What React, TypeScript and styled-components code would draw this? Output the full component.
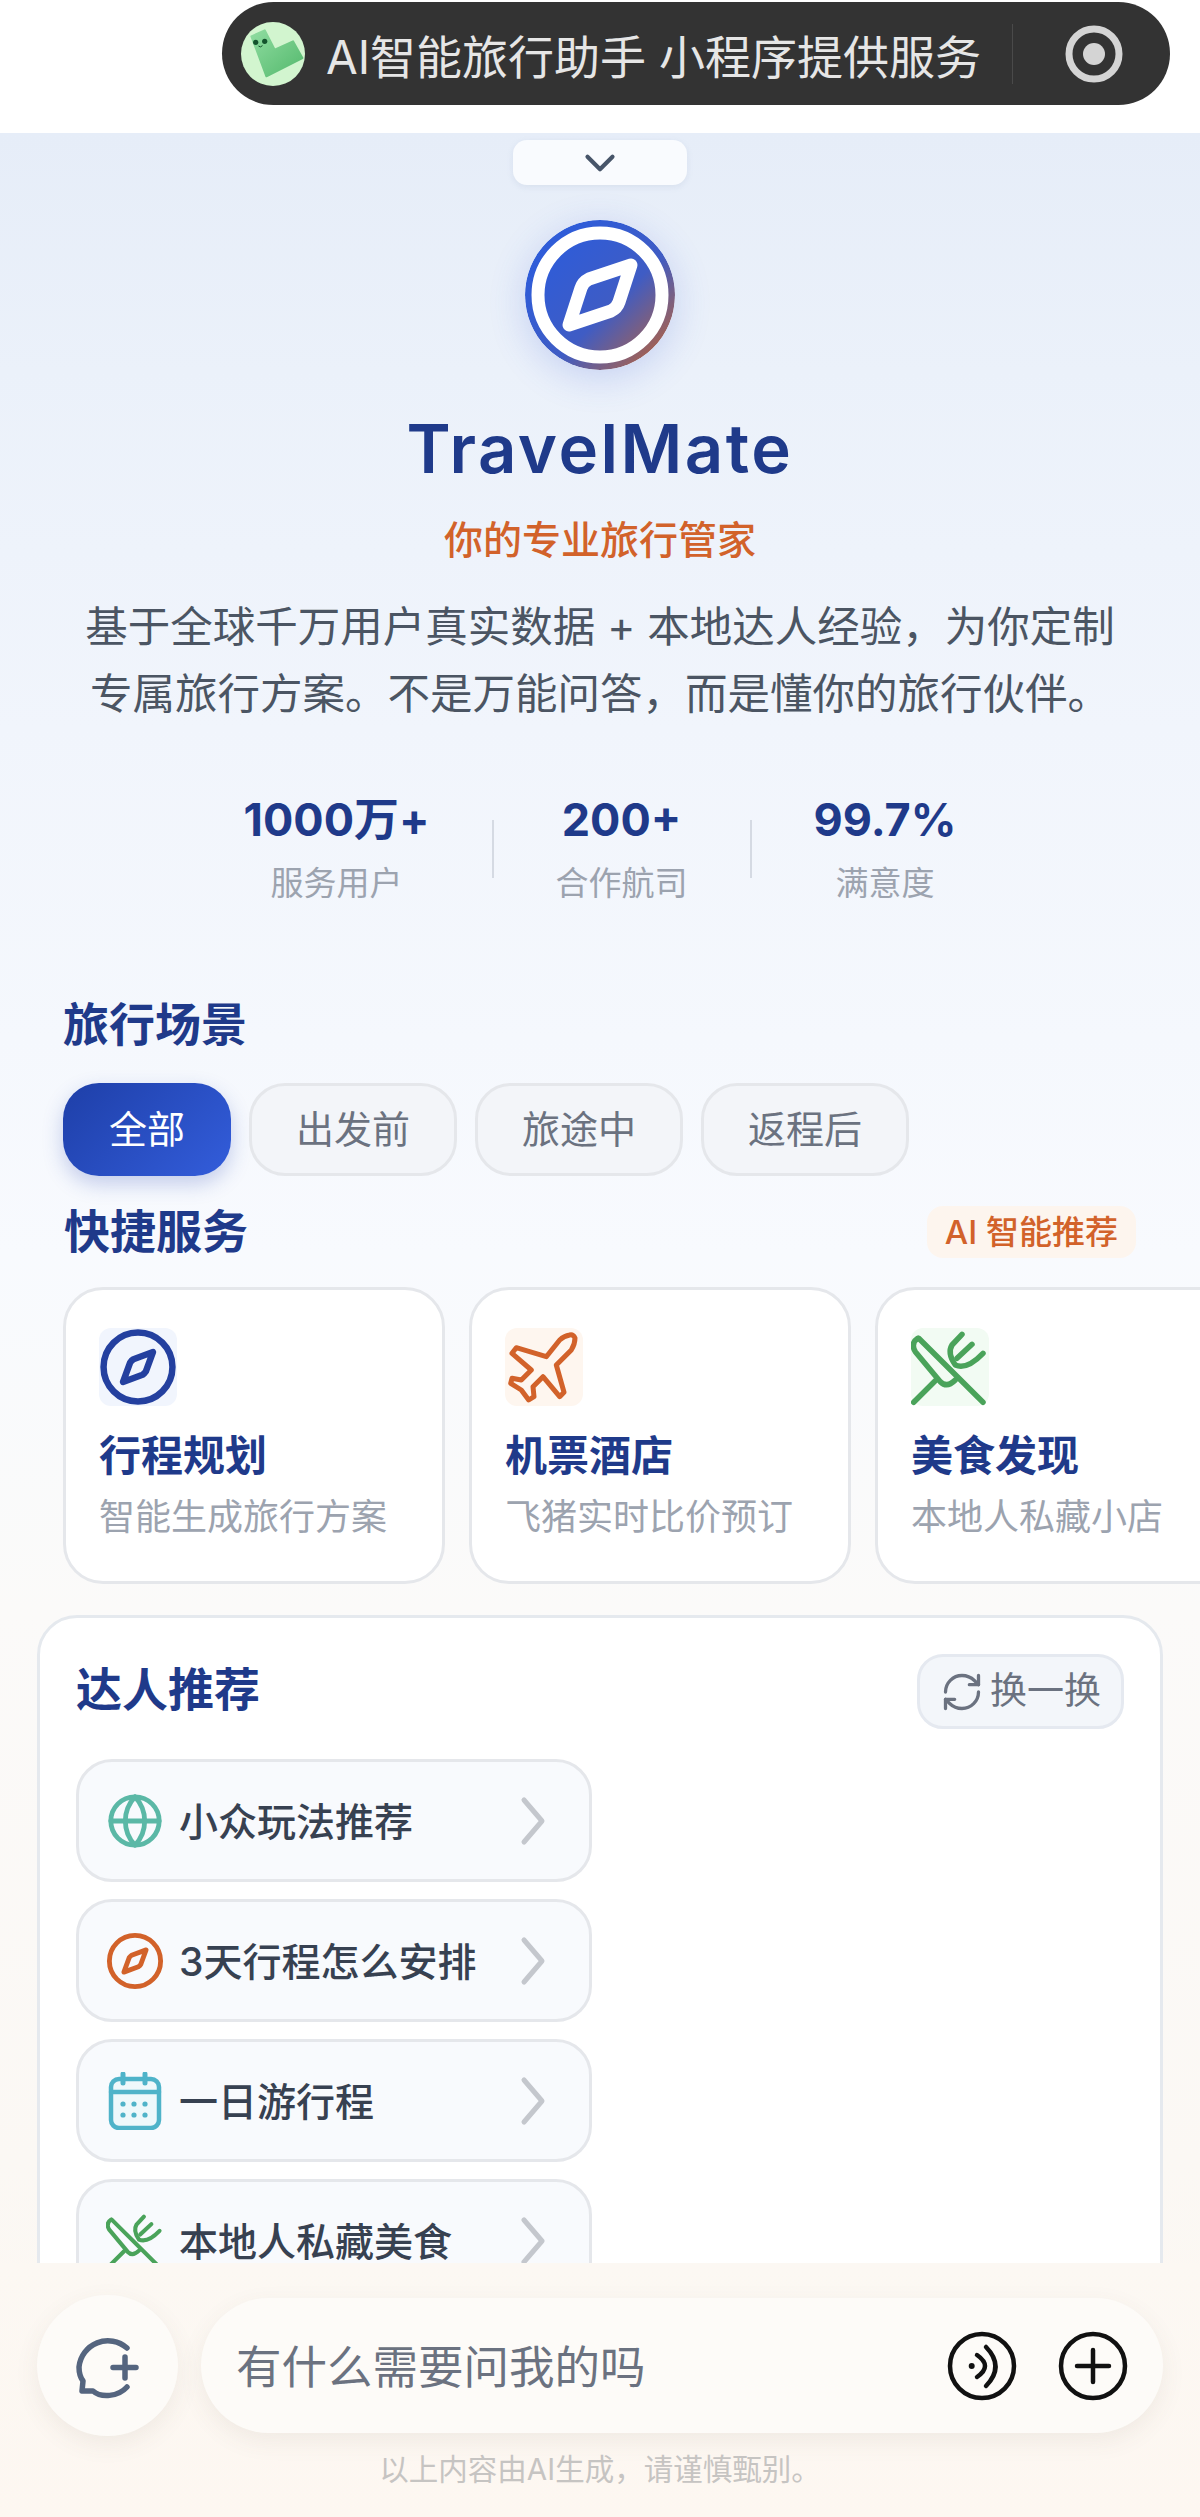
import React from 'react';
import styled, { createGlobalStyle } from 'styled-components';
import { ChevronDown, Globe, RefreshCw } from 'lucide-react';

const SANS = `Inter, "Noto Sans CJK SC", "Noto Sans", sans-serif`;
const NAVY = '#1f3a8a';
const ORANGE = '#d2622a';

const GlobalStyle = createGlobalStyle`
    html, body {
        margin: 0;
        padding: 0;
        background: #fff;
    }
    * {
        box-sizing: border-box;
    }
`;

const Page = styled.div`
    width: 1200px;
    height: 2517px;
    display: flex;
    flex-direction: column;
    overflow: hidden;
    font-family: ${SANS};
`;

const TopBar = styled.header`
    flex: none;
    height: 133px;
    background: #fff;
    display: flex;
    justify-content: flex-end;
    padding: 2px 30px 0 0;
`;

const Capsule = styled.div`
    width: 948px;
    height: 103px;
    border-radius: 52px;
    background: #333333;
    display: flex;
    align-items: center;
    padding-left: 19px;
`;

const MiniAvatar = styled.svg`
    width: 64px;
    height: 64px;
    flex: none;
`;

const CapsuleTitle = styled.span`
    margin-left: 21px;
    font-size: 46px;
    font-weight: 400;
    color: #e6e6e6;
    white-space: nowrap;
    flex: none;
    width: 686px;
`;

const CapsuleDivider = styled.span`
    width: 1px;
    height: 60px;
    background: #4a4a4a;
    flex: none;
`;

const TargetIcon = styled.svg`
    width: 60px;
    height: 60px;
    margin-left: 51px;
    flex: none;
`;

const Body = styled.div`
    flex: 1;
    min-height: 0;
    display: flex;
    flex-direction: column;
    background: linear-gradient(180deg, #e6edf8 0%, #ebf1fa 10%, #f1f5fc 25%, #f5f8fd 38%, #f8fafe 47%, #fbfaf9 62%, #fbf8f4 85%, #fdf7f1 100%);
`;

const Scroll = styled.main`
    flex: 1;
    min-height: 0;
    overflow: hidden;
    display: flex;
    flex-direction: column;
`;

const Hero = styled.section`
    display: flex;
    flex-direction: column;
    align-items: center;
    flex: none;
`;

const CollapseTab = styled.button`
    margin-top: 7px;
    width: 174px;
    height: 45px;
    border: none;
    border-radius: 14px;
    background: #f9fbfe;
    box-shadow: 0 2px 6px rgba(120, 140, 180, 0.14);
    color: #475569;
    display: flex;
    align-items: center;
    justify-content: center;
    padding: 0;
`;

const LogoBadge = styled.svg`
    margin-top: 35px;
    width: 150px;
    height: 150px;
    border-radius: 50%;
    box-shadow: 0 8px 36px rgba(70, 100, 220, 0.22);
    flex: none;
`;

const BrandName = styled.h1`
    margin: 47px 0 0;
    font-size: 67px;
    line-height: 64px;
    font-weight: 600;
    letter-spacing: 2.5px;
    color: ${NAVY};
`;

const Tagline = styled.div`
    margin-top: 34px;
    font-size: 39px;
    line-height: 50px;
    font-weight: 500;
    color: ${ORANGE};
`;

const Intro = styled.p`
    margin: 28px 0 0;
    font-size: 42.5px;
    line-height: 67px;
    color: #4b5563;
    text-align: center;
    white-space: nowrap;
`;

const StatsRow = styled.div`
    margin-top: 68px;
    display: flex;
    align-items: flex-start;
`;

const Stat = styled.div`
    padding: 0 62px;
    display: flex;
    flex-direction: column;
    align-items: center;
    gap: 18px;
`;

const StatValue = styled.div`
    font-size: 45px;
    line-height: 50px;
    font-weight: 700;
    color: ${NAVY};
    white-space: nowrap;
`;

const StatLabel = styled.div`
    font-size: 33px;
    line-height: 40px;
    color: #9ca3af;
    white-space: nowrap;
`;

const StatDivider = styled.div`
    width: 2px;
    height: 58px;
    margin-top: 25px;
    background: #d5dae3;
    flex: none;
`;

const Section = styled.section`
    flex: none;
    padding-left: 63px;
`;

const SectionTitle = styled.h2`
    margin: 93px 0 0;
    font-size: 46px;
    line-height: 56px;
    font-weight: 600;
    color: ${NAVY};
`;

const ChipRow = styled.div`
    margin-top: 31px;
    display: flex;
    gap: 18px;
`;

const Chip = styled.button<{ $active?: boolean }>`
    height: 93px;
    padding: 0 ${props => props.$active ? 46 : 44}px 7px;
    border-radius: 36px;
    font-family: ${SANS};
    font-size: 38px;
    white-space: nowrap;
    border: ${props => props.$active ? 'none' : '3px solid #e5e7eb'};
    color: ${props => props.$active ? '#fff' : '#6b7280'};
    background: ${props => props.$active ? 'linear-gradient(135deg, #1e3fa8, #335ddb)' : '#f3f5f9'};
    box-shadow: ${props => props.$active ? '0 8px 20px rgba(40, 70, 180, 0.25)' : 'none'};
`;

const ServiceHead = styled.div`
    margin-top: 30px;
    height: 52px;
    display: flex;
    align-items: center;
    justify-content: space-between;
    padding-right: 64px;
`;

const ServiceTitle = styled.h2`
    margin: 0 0 2px 1px;
    font-size: 46px;
    line-height: 56px;
    font-weight: 600;
    color: ${NAVY};
`;

const SmartTag = styled.span`
    height: 52px;
    padding: 0 18px 4px;
    border-radius: 16px;
    background: #fdf5ee;
    color: ${ORANGE};
    font-size: 33px;
    font-weight: 500;
    display: flex;
    align-items: center;
    white-space: nowrap;
`;

const CardRow = styled.div`
    margin-top: 29px;
    display: flex;
    gap: 24px;
    overflow: hidden;
`;

const ServiceCard = styled.article`
    flex: none;
    width: 382px;
    height: 297px;
    padding: 38px 0 0 33px;
    background: #fff;
    border: 3px solid #e5e7eb;
    border-radius: 40px;
`;

const CardIcon = styled.div<{ $bg: string; $color: string }>`
    width: 78px;
    height: 78px;
    border-radius: 12px;
    background: ${props => props.$bg};
    color: ${props => props.$color};
    display: flex;
    align-items: center;
    justify-content: center;
`;

const CardTitle = styled.div`
    margin-top: 22px;
    font-size: 42px;
    line-height: 56px;
    font-weight: 600;
    color: ${NAVY};
    white-space: nowrap;
`;

const CardText = styled.div`
    margin-top: 9px;
    font-size: 36px;
    line-height: 48px;
    color: #9ca3af;
    white-space: nowrap;
`;

const ExpertPanel = styled.section`
    flex: none;
    margin: 31px 0 0 37px;
    width: 1126px;
    height: 700px;
    padding: 36px 36px 0;
    background: #fff;
    border: 3px solid #e5e9ee;
    border-radius: 40px;
`;

const PanelHead = styled.div`
    display: flex;
    align-items: center;
    justify-content: space-between;
    height: 75px;
`;

const PanelTitle = styled.h3`
    margin: 0 0 12px;
    font-size: 46px;
    font-weight: 600;
    color: ${NAVY};
`;

const SwapButton = styled.button`
    width: 207px;
    height: 75px;
    border-radius: 26px;
    border: 3px solid #e5e9f0;
    background: #f3f6fa;
    color: #6b7280;
    font-family: ${SANS};
    font-size: 37px;
    display: flex;
    align-items: center;
    justify-content: center;
    gap: 6px;
    padding: 0 0 7px;
    svg {
        margin-top: 7px;
    }
`;

const PromptList = styled.div`
    margin-top: 30px;
    display: flex;
    flex-direction: column;
    gap: 17px;
`;

const PromptItem = styled.div`
    width: 516px;
    height: 123px;
    flex: none;
    padding: 0 43px 0 27px;
    border-radius: 36px;
    border: 3px solid #e5e7eb;
    background: #f8fafd;
    display: flex;
    align-items: center;
`;

const PromptIcon = styled.div<{ $color: string }>`
    width: 58px;
    height: 58px;
    flex: none;
    color: ${props => props.$color};
    display: flex;
    align-items: center;
    justify-content: center;
`;

const PromptText = styled.span`
    margin-left: 15px;
    padding-bottom: 4px;
    flex: 1;
    font-size: 39px;
    font-weight: 500;
    color: #374151;
    white-space: nowrap;
`;

const PromptArrow = styled.svg`
    width: 26px;
    height: 50px;
    flex: none;
`;

const Composer = styled.footer`
    flex: none;
    height: 254px;
    background: linear-gradient(180deg, #fcf8f3, #fdf7f1);
    position: relative;
    z-index: 1;
    padding: 32px 37px 0;
`;

const ComposerRow = styled.div`
    display: flex;
    align-items: center;
    gap: 23px;
`;

const NewChatButton = styled.button`
    flex: none;
    width: 141px;
    height: 141px;
    border: none;
    border-radius: 50%;
    background: #fdfbf8;
    box-shadow: 0 8px 24px rgba(90, 80, 70, 0.08);
    display: flex;
    align-items: center;
    justify-content: center;
    padding: 0;
`;

const InputBox = styled.div`
    flex: 1;
    height: 135px;
    border-radius: 68px;
    background: #fdfbf8;
    box-shadow: 0 8px 24px rgba(90, 80, 70, 0.08);
    display: flex;
    align-items: center;
    padding: 0 35px 0 35px;
`;

const Placeholder = styled.span`
    flex: 1;
    padding-bottom: 4px;
    font-size: 45.5px;
    color: #6b7280;
    white-space: nowrap;
`;

const RoundIcon = styled.svg`
    flex: none;
    width: 70px;
    height: 70px;
    color: #111;
    & + & {
        margin-left: 41px;
    }
`;

const Disclaimer = styled.div`
    margin-top: 13px;
    text-align: center;
    font-size: 29.5px;
    line-height: 40px;
    color: #c6c4c2;
`;

const CompassGlyph: React.FC<{ size: number; stroke: number }> = ({ size, stroke }) => (
    <svg width={size} height={size} viewBox="0 0 24 24" fill="none" stroke="currentColor" strokeWidth={stroke} strokeLinejoin="round">
        <circle cx="12" cy="12" r="10.6" />
        <path d="M16.6 7.4 L14.4 13.4 Q14 14 13.4 14.4 L7.4 16.6 L9.6 10.6 Q10 10 10.6 9.6 Z" />
    </svg>
);

const PlaneGlyph = () => (
    <svg width="78" height="78" viewBox="0 0 78 78" fill="none" stroke="currentColor" strokeWidth="5" strokeLinejoin="round" strokeLinecap="round">
        <path d="M70 10 Q68 6 64.7 7 Q59 8 54.7 12 L41.3 28.7 L11.3 19.7 L7 25.3 L26.3 42 L16.3 52 L7 50.3 L5.7 55.3 L16.3 62 L23.7 72 L29 68.7 L28 58.7 L38 48.7 L54.7 68.7 L59 64.3 L51.3 37 L66.3 22 Q70 16 70 10 Z" />
    </svg>
);

const UtensilsGlyph: React.FC<{ size: number }> = ({ size }) => (
    <svg width={size} height={size} viewBox="0 0 78 78" fill="none" stroke="currentColor" strokeWidth="5.5" strokeLinejoin="round" strokeLinecap="round">
        <path d="M7.7 10.3 L72 74.3" />
        <path d="M6.7 10.3 Q-0.7 15.3 4.3 23.7 L29.3 53.7 Q36 60.3 44.3 52" />
        <path d="M2.7 74.3 L24.3 52.7" />
        <path d="M51 6.3 L41 17 Q36 25.3 44.3 37 Q56 42 72 25.3" />
        <path d="M61 16.3 L46 30.3" />
    </svg>
);

const CalendarGlyph = () => (
    <svg width="54" height="58" viewBox="0 0 54 58" fill="none" stroke="#4fb3c9" strokeWidth="4.5" strokeLinecap="round">
        <rect x="3" y="7" width="48" height="49" rx="8" fill="#eef8fb" />
        <path d="M3 20 H51" />
        <path d="M15 2 V11 M37 2 V11" strokeWidth="5" />
        {[15, 26, 37].map(x => [32, 43].map(y => <circle key={`${x}-${y}`} cx={x} cy={y} r="2.6" fill="#4fb3c9" stroke="none" />))}
    </svg>
);

const prompts = [
    { text: '小众玩法推荐', color: '#5bb8a6', icon: <Globe size={70} strokeWidth={2} /> },
    { text: '3天行程怎么安排', color: ORANGE, icon: <CompassGlyph size={58} stroke={2} /> },
    { text: '一日游行程', color: '#4fb3c9', icon: <CalendarGlyph /> },
    { text: '本地人私藏美食', color: '#4aa35a', icon: <UtensilsGlyph size={58} /> },
];

const services = [
    { title: '行程规划', text: '智能生成旅行方案', bg: '#f1f5fd', color: '#24409f', icon: <CompassGlyph size={78} stroke={2} /> },
    { title: '机票酒店', text: '飞猪实时比价预订', bg: '#fef6ef', color: ORANGE, icon: <PlaneGlyph /> },
    { title: '美食发现', text: '本地人私藏小店', bg: '#f2fbf3', color: '#4aa35a', icon: <UtensilsGlyph size={78} /> },
];

export default function App() {
    return (
        <Page>
            <GlobalStyle />
            <TopBar>
                <Capsule>
                    <MiniAvatar viewBox="0 0 64 64">
                        <defs>
                            <linearGradient id="wormFill" x1="0" y1="0" x2="1" y2="1">
                                <stop offset="0" stopColor="#8fdca0" />
                                <stop offset="1" stopColor="#54b96d" />
                            </linearGradient>
                        </defs>
                        <circle cx="32" cy="32" r="32" fill="#d2f5cf" />
                        <path d="M10.4 14.3 L23.7 8.3 L33.7 27.6 L52 19.3 L61.4 36 L25.4 54.3 Z" fill="url(#wormFill)" stroke="url(#wormFill)" strokeWidth="2" strokeLinejoin="round" />
                        <circle cx="14.7" cy="20.3" r="2.6" fill="#14532d" />
                        <circle cx="23.7" cy="19.3" r="2.6" fill="#14532d" />
                        <path d="M17.5 24 Q19.5 26 21.5 23.6" fill="none" stroke="#14532d" strokeWidth="1" />
                    </MiniAvatar>
                    <CapsuleTitle>AI智能旅行助手 小程序提供服务</CapsuleTitle>
                    <CapsuleDivider />
                    <TargetIcon viewBox="0 0 60 60">
                        <circle cx="30" cy="30" r="25" fill="none" stroke="#d4d4d4" strokeWidth="7" />
                        <circle cx="30" cy="30" r="11" fill="#d4d4d4" />
                    </TargetIcon>
                </Capsule>
            </TopBar>
            <Body>
                <Scroll>
                    <Hero>
                        <CollapseTab><ChevronDown size={50} strokeWidth={2} /></CollapseTab>
                        <LogoBadge viewBox="0 0 150 150">
                            <defs>
                                <linearGradient id="logoFill" x1="0.2" y1="0.2" x2="0.95" y2="0.95">
                                    <stop offset="0" stopColor="#2f5cd8" />
                                    <stop offset="0.5" stopColor="#3f5cc4" />
                                    <stop offset="0.8" stopColor="#8a6070" />
                                    <stop offset="1" stopColor="#c2612f" />
                                </linearGradient>
                            </defs>
                            <circle cx="75" cy="75" r="75" fill="url(#logoFill)" />
                            <circle cx="75" cy="75" r="62" fill="none" stroke="#fff" strokeWidth="13" />
                            <path d="M106 45 L94 82 Q92 88 86 91 L44 105 L56 68 Q58 62 64 59 Z" fill="none" stroke="#fff" strokeWidth="13" strokeLinejoin="round" />
                        </LogoBadge>
                        <BrandName>TravelMate</BrandName>
                        <Tagline>你的专业旅行管家</Tagline>
                        <Intro>
                            基于全球千万用户真实数据 + 本地达人经验，为你定制<br />
                            专属旅行方案。不是万能问答，而是懂你的旅行伙伴。
                        </Intro>
                        <StatsRow>
                            <Stat><StatValue>1000万+</StatValue><StatLabel>服务用户</StatLabel></Stat>
                            <StatDivider />
                            <Stat><StatValue>200+</StatValue><StatLabel>合作航司</StatLabel></Stat>
                            <StatDivider />
                            <Stat><StatValue>99.7%</StatValue><StatLabel>满意度</StatLabel></Stat>
                        </StatsRow>
                    </Hero>
                    <Section>
                        <SectionTitle>旅行场景</SectionTitle>
                        <ChipRow>
                            <Chip $active>全部</Chip>
                            <Chip>出发前</Chip>
                            <Chip>旅途中</Chip>
                            <Chip>返程后</Chip>
                        </ChipRow>
                        <ServiceHead>
                            <ServiceTitle>快捷服务</ServiceTitle>
                            <SmartTag>AI 智能推荐</SmartTag>
                        </ServiceHead>
                        <CardRow>
                            {services.map(s => (
                                <ServiceCard key={s.title}>
                                    <CardIcon $bg={s.bg} $color={s.color}>{s.icon}</CardIcon>
                                    <CardTitle>{s.title}</CardTitle>
                                    <CardText>{s.text}</CardText>
                                </ServiceCard>
                            ))}
                        </CardRow>
                    </Section>
                    <ExpertPanel>
                        <PanelHead>
                            <PanelTitle>达人推荐</PanelTitle>
                            <SwapButton><RefreshCw size={44} strokeWidth={1.8} />换一换</SwapButton>
                        </PanelHead>
                        <PromptList>
                            {prompts.map(p => (
                                <PromptItem key={p.text}>
                                    <PromptIcon $color={p.color}>{p.icon}</PromptIcon>
                                    <PromptText>{p.text}</PromptText>
                                    <PromptArrow viewBox="0 0 26 50" fill="none" stroke="#c4c7cd" strokeWidth="5" strokeLinecap="round" strokeLinejoin="round">
                                        <path d="M4 4 L22 25 L4 46" />
                                    </PromptArrow>
                                </PromptItem>
                            ))}
                        </PromptList>
                    </ExpertPanel>
                </Scroll>
                <Composer>
                    <ComposerRow>
                        <NewChatButton>
                            <svg width="100" height="90" viewBox="0 0 100 90" fill="none" stroke="#55657f" strokeWidth="5.5" strokeLinecap="round" strokeLinejoin="round">
                                <path d="M69 27 A29 29 0 0 0 21 46 C21 52 22 56 25 60 L24 70 L35 70 C43 77 60 76 69 66" />
                                <path d="M55 46.5 H78 M67 36 V57" />
                            </svg>
                        </NewChatButton>
                        <InputBox>
                            <Placeholder>有什么需要问我的吗</Placeholder>
                            <RoundIcon viewBox="0 0 70 70" fill="none" stroke="currentColor" strokeWidth="4.5" strokeLinecap="round">
                                <circle cx="35" cy="35" r="32" />
                                <circle cx="24.7" cy="35" r="3" fill="currentColor" stroke="none" />
                                <path d="M30 24 Q46 35 30 46" />
                                <path d="M39 16 Q58 35.5 39 55" />
                            </RoundIcon>
                            <RoundIcon viewBox="0 0 70 70" fill="none" stroke="currentColor" strokeWidth="4.5" strokeLinecap="round">
                                <circle cx="35" cy="35" r="32" />
                                <path d="M19 35 H51 M35 19 V51" />
                            </RoundIcon>
                        </InputBox>
                    </ComposerRow>
                    <Disclaimer>以上内容由AI生成，请谨慎甄别。</Disclaimer>
                </Composer>
            </Body>
        </Page>
    );
}
